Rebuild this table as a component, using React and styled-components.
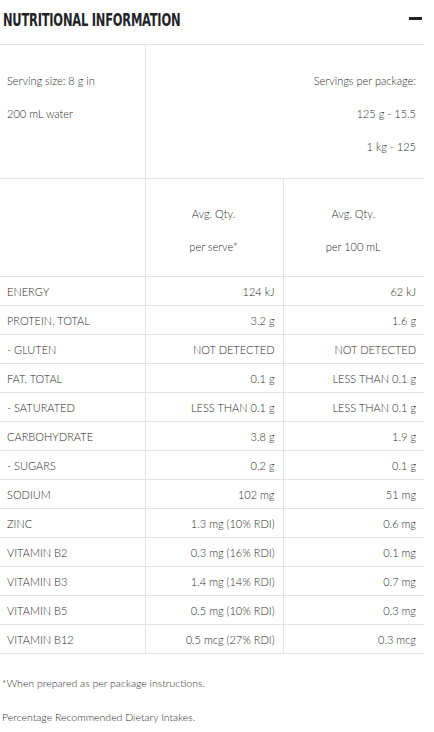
import React from 'react';
import styled, { createGlobalStyle } from 'styled-components';

const GlobalStyle = createGlobalStyle`
  html, body {
    margin: 0;
    padding: 0;
    background: #fff;
  }
  body {
    font-family: Lato, "Open Sans", sans-serif;
    font-weight: 300;
    color: #2c2c2c;
  }
`;

const Panel = styled.section`
  width: 424px;
`;

const Header = styled.div`
  height: 44px;
  display: flex;
  align-items: center;
  justify-content: space-between;
  padding: 0 2px 0 3px;
  box-sizing: border-box;
`;

const Title = styled.h2`
  margin: 0;
  margin-top: -5px;
  font-family: "Liberation Sans Narrow", "DejaVu Sans Condensed", sans-serif;
  font-weight: 700;
  font-size: 17px;
  letter-spacing: -0.3px;
  color: #1f2428;
  transform: scaleX(0.75);
  transform-origin: left center;
  white-space: nowrap;
`;

const Minus = styled.span`
  display: block;
  width: 13px;
  height: 3px;
  margin-top: -7px;
  background: #222;
`;

const Table = styled.table`
  width: 424px;
  border-collapse: collapse;
  table-layout: fixed;
  font-size: 11px;
`;

const Cell = styled.td`
  border-top: 1px solid #e3e3e3;
  border-bottom: 1px solid #e3e3e3;
  border-left: ${(p) => (p.$first ? 'none' : '1px solid #e3e3e3')};
  padding: 0 8px 0 7px;
  height: 28px;
  text-align: ${(p) => p.$align || 'right'};
  white-space: nowrap;
  vertical-align: middle;
`;

const TopCell = styled(Cell)`
  height: auto;
  vertical-align: top;
  padding-top: 19px;
  padding-bottom: 15px;
`;

const HeadCell = styled(Cell)`
  height: auto;
  vertical-align: top;
  padding-top: 18px;
  padding-bottom: 13px;
`;

const Line = styled.div`
  line-height: 33px;
  height: 33px;
`;

const Notes = styled.div`
  padding: 12px 0 0 2px;
  font-size: 10.5px;
  line-height: 34px;
`;

const rows = [
  ['ENERGY', '124 kJ', '62 kJ'],
  ['PROTEIN, TOTAL', '3.2 g', '1.6 g'],
  ['- GLUTEN', 'NOT DETECTED', 'NOT DETECTED'],
  ['FAT, TOTAL', '0.1 g', 'LESS THAN 0.1 g'],
  ['- SATURATED', 'LESS THAN 0.1 g', 'LESS THAN 0.1 g'],
  ['CARBOHYDRATE', '3.8 g', '1.9 g'],
  ['- SUGARS', '0.2 g', '0.1 g'],
  ['SODIUM', '102 mg', '51 mg'],
  ['ZINC', '1.3 mg (10% RDI)', '0.6 mg'],
  ['VITAMIN B2', '0.3 mg (16% RDI)', '0.1 mg'],
  ['VITAMIN B3', '1.4 mg (14% RDI)', '0.7 mg'],
  ['VITAMIN B5', '0.5 mg (10% RDI)', '0.3 mg'],
  ['VITAMIN B12', '0.5 mcg (27% RDI)', '0.3 mcg'],
];

const App = () => (
  <>
    <GlobalStyle />
    <Panel>
      <Header>
        <Title>NUTRITIONAL INFORMATION</Title>
        <Minus />
      </Header>
      <Table>
        <colgroup>
          <col style={{ width: 145 }} />
          <col style={{ width: 138 }} />
          <col style={{ width: 141 }} />
        </colgroup>
        <tbody>
          <tr>
            <TopCell $first $align="left">
              <Line>Serving size: 8 g in</Line>
              <Line>200 mL water</Line>
            </TopCell>
            <TopCell colSpan={2}>
              <Line>Servings per package:</Line>
              <Line>125 g - 15.5</Line>
              <Line>1 kg - 125</Line>
            </TopCell>
          </tr>
          <tr>
            <HeadCell $first />
            <HeadCell $align="center">
              <Line>Avg. Qty.</Line>
              <Line>per serve*</Line>
            </HeadCell>
            <HeadCell $align="center">
              <Line>Avg. Qty.</Line>
              <Line>per 100 mL</Line>
            </HeadCell>
          </tr>
          {rows.map(([name, serve, per100]) => (
            <tr key={name}>
              <Cell $first $align="left">{name}</Cell>
              <Cell>{serve}</Cell>
              <Cell>{per100}</Cell>
            </tr>
          ))}
        </tbody>
      </Table>
      <Notes>
        <div>*When prepared as per package instructions.</div>
        <div>Percentage Recommended Dietary Intakes.</div>
      </Notes>
    </Panel>
  </>
);

export default App;
